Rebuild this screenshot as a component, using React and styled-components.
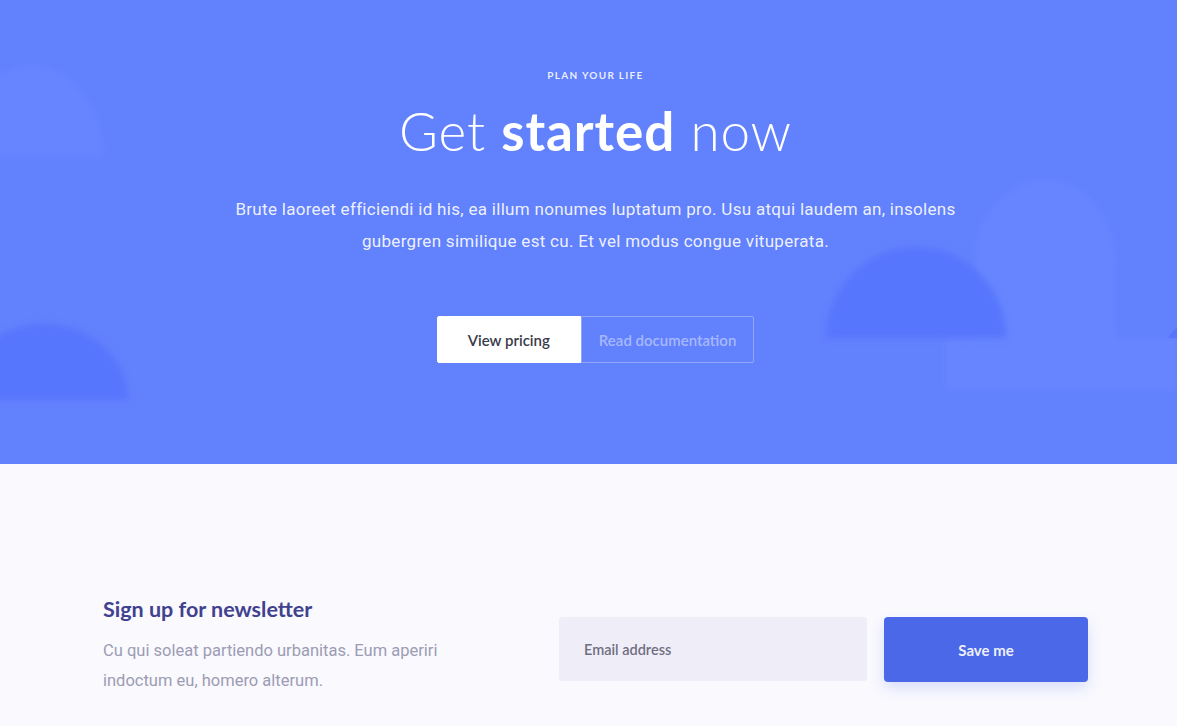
import React from 'react';
import styled, { createGlobalStyle } from 'styled-components';

const GlobalStyle = createGlobalStyle`
  html, body {
    margin: 0;
    padding: 0;
    background: #f9f9fe;
  }
  * { box-sizing: border-box; }
`;

const Page = styled.div`
  width: 100%;
  min-height: 726px;
  background: #f9f9fe;
  font-family: Roboto, "Liberation Sans", sans-serif;
`;

const Hero = styled.section`
  position: relative;
  height: 464px;
  background: #6281fd;
  overflow: hidden;
  display: flex;
  flex-direction: column;
  align-items: center;
  padding: 69px 0 0 14px;
`;

const Decor = styled.svg`
  position: absolute;
  inset: 0;
  width: 100%;
  height: 100%;
  pointer-events: none;
`;

const HeroContent = styled.div`
  position: relative;
  display: flex;
  flex-direction: column;
  align-items: center;
  text-align: center;
`;

const Eyebrow = styled.div`
  font-family: Lato, "Noto Sans", sans-serif;
  font-size: 10px;
  font-weight: 700;
  letter-spacing: 1.3px;
  color: rgba(255, 255, 255, 0.88);
  text-transform: uppercase;
`;

const Title = styled.h1`
  margin: 20px 0 0;
  font-family: Lato, "Noto Sans", sans-serif;
  font-size: 53px;
  line-height: 60px;
  font-weight: 300;
  color: #fff;
  letter-spacing: 0.9px;

  strong {
    font-weight: 700;
  }
`;

const Lead = styled.p`
  margin: 32px 0 0;
  width: 760px;
  font-size: 17px;
  line-height: 32px;
  color: rgba(255, 255, 255, 0.9);
  letter-spacing: 0.3px;
`;

const Actions = styled.div`
  display: flex;
  margin-top: 59px;
`;

const HeroButton = styled.button`
  height: 47px;
  padding: 0 ${(p) => (p.$primary ? '30px' : '17px')};
  border: 1px solid ${(p) => (p.$primary ? '#fff' : 'rgba(255,255,255,0.3)')};
  background: ${(p) => (p.$primary ? '#fff' : 'transparent')};
  color: ${(p) => (p.$primary ? '#3a3a4a' : 'rgba(255,255,255,0.45)')};
  font-family: Lato, "Noto Sans", sans-serif;
  font-size: 15px;
  font-weight: 600;
  border-radius: ${(p) => (p.$primary ? '2px 0 0 2px' : '0 2px 2px 0')};
  cursor: pointer;
`;

const Newsletter = styled.section`
  display: flex;
  align-items: flex-start;
  padding: 132px 89px 0 103px;
`;

const NewsText = styled.div`
  width: 456px;
`;

const NewsTitle = styled.h2`
  margin: 0;
  font-family: Lato, "Noto Sans", sans-serif;
  font-size: 21.5px;
  font-weight: 700;
  color: #40428f;
  line-height: 26px;
`;

const NewsCopy = styled.p`
  margin: 14px 0 0;
  width: 380px;
  font-size: 16.5px;
  line-height: 30px;
  color: #9c9cb4;
`;

const Form = styled.form`
  display: flex;
  gap: 17px;
  margin-top: 21px;
`;

const EmailInput = styled.input`
  width: 308px;
  height: 64px;
  border: none;
  border-radius: 3px;
  background: #efeef8;
  padding: 0 25px;
  font-family: Lato, "Noto Sans", sans-serif;
  font-size: 14.5px;
  font-weight: 600;
  color: #3a3a4a;
  outline: none;

  &::placeholder {
    color: #6f6f82;
  }
`;

const SaveButton = styled.button`
  width: 204px;
  height: 65px;
  border: none;
  border-radius: 4px;
  background: #4b68e8;
  color: rgba(255, 255, 255, 0.92);
  font-family: Lato, "Noto Sans", sans-serif;
  font-size: 15px;
  font-weight: 700;
  box-shadow: 0 6px 14px rgba(75, 104, 232, 0.18);
  cursor: pointer;
`;

export default function App() {
  return (
    <Page>
      <GlobalStyle />
      <Hero>
        <Decor viewBox="0 0 1177 464" preserveAspectRatio="none">
          <defs>
            <filter id="soft" x="-20%" y="-20%" width="140%" height="140%">
              <feGaussianBlur stdDeviation="3" />
            </filter>
          </defs>
          <path d="M-40 157 A 72 92 0 0 1 104 157 Z" fill="#6886ff" opacity="0.8" filter="url(#soft)" />
          <path d="M-40 400 A 84 76 0 0 1 128 400 Z" fill="#5776fd" filter="url(#soft)" />
          <g opacity="0.55" filter="url(#soft)">
            <path d="M975 260 A 70 80 0 0 1 1115 260 L1115 338 L975 338 Z" fill="#6b89ff" />
            <rect x="945" y="338" width="232" height="52" fill="#6b89ff" />
          </g>
          <path d="M826 338 A 90 91 0 0 1 1006 338 Z" fill="#5776fd" filter="url(#soft)" />
          <path d="M1168 338 A 40 40 0 0 1 1210 320 L1210 338 Z" fill="#5776fd" />
        </Decor>
        <HeroContent>
          <Eyebrow>Plan your life</Eyebrow>
          <Title>
            Get <strong>started</strong> now
          </Title>
          <Lead>
            Brute laoreet efficiendi id his, ea illum nonumes luptatum pro. Usu atqui laudem an, insolens
            gubergren similique est cu. Et vel modus congue vituperata.
          </Lead>
          <Actions>
            <HeroButton $primary>View pricing</HeroButton>
            <HeroButton>Read documentation</HeroButton>
          </Actions>
        </HeroContent>
      </Hero>
      <Newsletter>
        <NewsText>
          <NewsTitle>Sign up for newsletter</NewsTitle>
          <NewsCopy>
            Cu qui soleat partiendo urbanitas. Eum aperiri indoctum eu, homero alterum.
          </NewsCopy>
        </NewsText>
        <Form onSubmit={(e) => e.preventDefault()}>
          <EmailInput type="email" placeholder="Email address" />
          <SaveButton type="submit">Save me</SaveButton>
        </Form>
      </Newsletter>
    </Page>
  );
}
